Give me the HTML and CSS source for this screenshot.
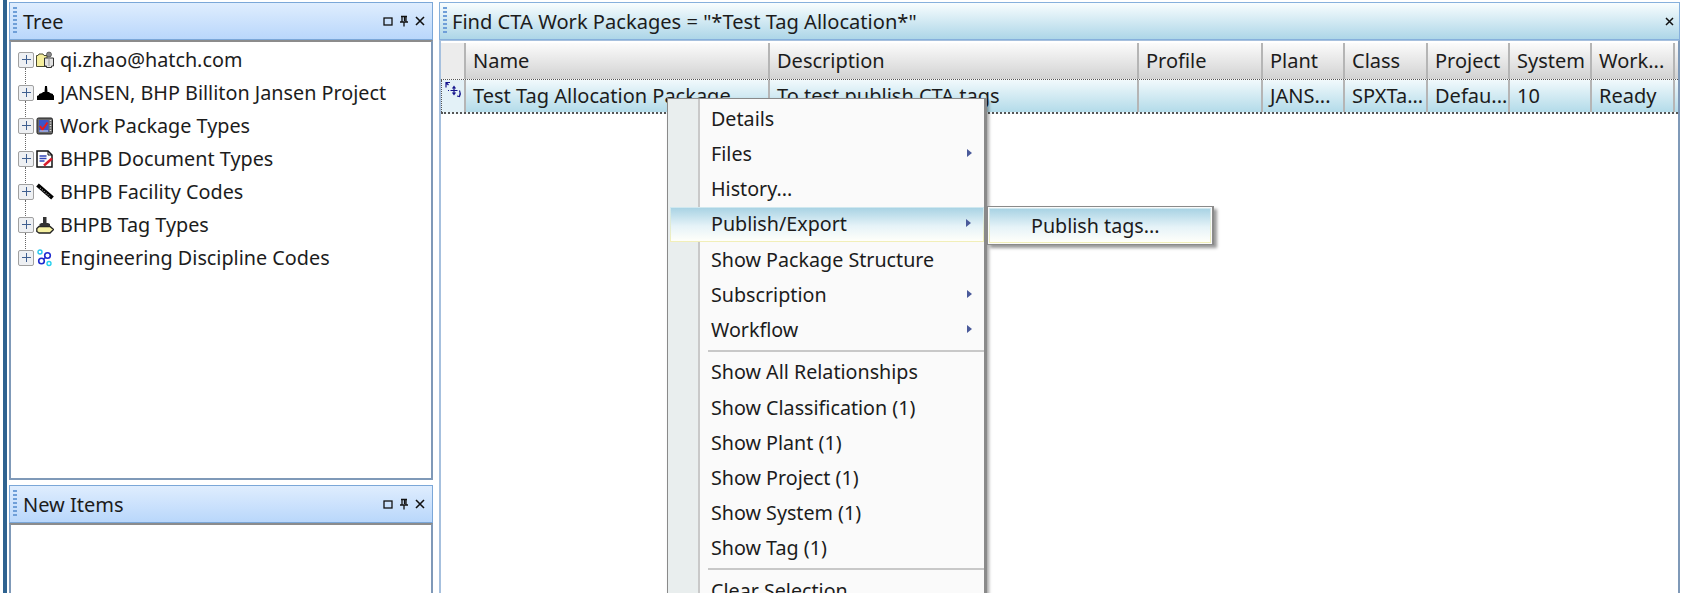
FILE: index.html
```html
<!DOCTYPE html>
<html lang="en">
<head>
<meta charset="utf-8">
<title>Find CTA Work Packages</title>
<link rel="stylesheet" href="styles.css">
</head>
<body>
<div class="app">
  <div class="left">
    <section class="pane tree-pane">
      <header class="title blue">
        <span class="grip"></span><span class="title-text">Tree</span>
        <span class="ctrls">
          <svg width="10" height="9" viewBox="0 0 10 9"><rect x="1" y="1" width="8" height="7" fill="none" stroke="#111" stroke-width="1.3"/></svg>
          <svg width="10" height="12" viewBox="0 0 10 12"><path d="M2 1.5h6M3 1.5v5M7 1.5v5M1 7h8M5 7v4.5M5.5 2v4" fill="none" stroke="#111" stroke-width="1.3"/></svg>
          <svg width="10" height="10" viewBox="0 0 10 10"><path d="M1 1l8 8M9 1l-8 8" stroke="#111" stroke-width="1.6"/></svg>
        </span>
      </header>
      <div class="body tree-body">
        <div class="node"><span class="exp"></span>
          <svg class="ico" width="18" height="18" viewBox="0 0 18 18"><path d="M0.500 4.500h1.500l1-1.500h4l1 1.500h3v11h-10.500z" fill="#f6ef9c" stroke="#4a4a30"/><circle cx="13" cy="3.500" r="2.500" fill="#8a8a8a" stroke="#333" stroke-width=".6"/><path d="M8.500 7h9v8h-2v1.500h-5v-1.500h-2z" fill="#e2e2e2" stroke="#333"/><path d="M13 7v8" stroke="#999"/></svg>
          <span>qi.zhao@hatch.com</span></div>
        <div class="node"><span class="exp"></span>
          <svg class="ico" width="18" height="18" viewBox="0 0 18 18"><path d="M1 16v-4l2-1v-1l3-1 1-1h1.500l.5-6h2l.5 6h1.500l1 1 3 1v1l2 1v4z" fill="#000"/></svg>
          <span>JANSEN, BHP Billiton Jansen Project</span></div>
        <div class="node"><span class="exp"></span>
          <svg class="ico" width="18" height="18" viewBox="0 0 18 18"><rect x="1" y="1" width="15.500" height="16" rx="1.500" fill="#6a6a6a" stroke="#1c1c1c"/><rect x="3" y="3" width="9.500" height="12" fill="#3b55c9"/><path d="M4 9l2.500 3.500 5-7" fill="none" stroke="#e81c1c" stroke-width="2"/><path d="M3.500 14h8.500" stroke="#e8e8e8"/><path d="M14.500 3v12" stroke="#ddd" stroke-dasharray="1 1.500" stroke-width="1.500"/></svg>
          <span>Work Package Types</span></div>
        <div class="node"><span class="exp"></span>
          <svg class="ico" width="18" height="18" viewBox="0 0 18 18"><path d="M1 1h11l4 4v12h-15z" fill="#fff" stroke="#111" stroke-width="1.500"/><path d="M12 1v4h4" fill="none" stroke="#111"/><path d="M3.500 6h7M3.500 8.500h7M3.500 11h5" stroke="#3245b8" stroke-width="1.400"/><path d="M8 15.500l8-7" stroke="#d81c2c" stroke-width="2.400"/></svg>
          <span>BHPB Document Types</span></div>
        <div class="node"><span class="exp"></span>
          <svg class="ico" width="18" height="18" viewBox="0 0 18 18"><path d="M1.500 2l15 13" stroke="#000" stroke-width="4"/><path d="M4 5l10 8.500" stroke="#aaa" stroke-width="1.200" stroke-dasharray="1 1.500"/></svg>
          <span>BHPB Facility Codes</span></div>
        <div class="node"><span class="exp"></span>
          <svg class="ico" width="18" height="18" viewBox="0 0 18 18"><path d="M3 17l-2.200-1.500v-3l2.200-2h11l3.500 3-3.500 3.500z" fill="#f6f1a2" stroke="#222" stroke-width="1.300"/><path d="M3.500 10.500v-2.500l2-1h1.500v-6h3.500v6h1.500l2 1v2.500z" fill="#333"/></svg>
          <span>BHPB Tag Types</span></div>
        <div class="node"><span class="exp"></span>
          <svg class="ico" width="18" height="18" viewBox="0 0 18 18" fill="none"><circle cx="4" cy="3" r="2" stroke="#27c8ee" stroke-width="1.400"/><circle cx="11.500" cy="6.500" r="2.800" stroke="#1f2bd0" stroke-width="1.600"/><circle cx="5.500" cy="12" r="2.800" stroke="#1f2bd0" stroke-width="1.600"/><circle cx="13" cy="14.500" r="2" stroke="#27d0ee" stroke-width="1.400"/><path d="M9.500 8.500l-2 1.500" stroke="#1f2bd0" stroke-width="1.400"/></svg>
          <span>Engineering Discipline Codes</span></div>
      </div>
    </section>
    <section class="pane items-pane">
      <header class="title blue">
        <span class="grip"></span><span class="title-text">New Items</span>
        <span class="ctrls">
          <svg width="10" height="9" viewBox="0 0 10 9"><rect x="1" y="1" width="8" height="7" fill="none" stroke="#111" stroke-width="1.3"/></svg>
          <svg width="10" height="12" viewBox="0 0 10 12"><path d="M2 1.5h6M3 1.5v5M7 1.5v5M1 7h8M5 7v4.5M5.5 2v4" fill="none" stroke="#111" stroke-width="1.3"/></svg>
          <svg width="10" height="10" viewBox="0 0 10 10"><path d="M1 1l8 8M9 1l-8 8" stroke="#111" stroke-width="1.6"/></svg>
        </span>
      </header>
      <div class="body open"></div>
    </section>
  </div>
  <section class="pane main-pane">
    <header class="title teal">
      <span class="grip"></span><span class="title-text">Find CTA Work Packages = "*Test Tag Allocation*"</span>
      <span class="ctrls">
        <svg width="9" height="9" viewBox="0 0 9 9"><path d="M1 1l7 7M8 1l-7 7" stroke="#111" stroke-width="1.5"/></svg>
      </span>
    </header>
    <div class="body grid">
      <div class="row head">
        <div class="cell c0"></div>
        <div class="cell c1">Name</div><div class="cell c2">Description</div><div class="cell c3">Profile</div>
        <div class="cell c4">Plant</div><div class="cell c5">Class</div><div class="cell c6">Project</div>
        <div class="cell c7">System</div><div class="cell c8">Work...</div>
      </div>
      <div class="row sel">
        <div class="cell c0">
          <svg class="row-ico" width="18" height="18" viewBox="0 0 18 18" fill="none" stroke="#14148c" stroke-width="1.200"><path d="M1 6.500v-5h4M1.500 2l2 2M9 6v7M5.500 9.500h7M7.500 7.500l1.500-2 1.500 2M7.500 11.500l1.500 2 1.500-2M3 9.500h1M14.500 9.500c1 2 1 4 0 6l-2.500-.5"/></svg>
        </div>
        <div class="cell c1">Test Tag Allocation Package</div><div class="cell c2">To test publish CTA tags</div><div class="cell c3"></div>
        <div class="cell c4">JANS...</div><div class="cell c5">SPXTa...</div><div class="cell c6">Defau...</div>
        <div class="cell c7">10</div><div class="cell c8">Ready</div>
      </div>
    </div>
  </section>
  <nav class="menu">
    <div class="mi">Details</div>
    <div class="mi sub">Files</div>
    <div class="mi">History...</div>
    <div class="mi sub hot">Publish/Export</div>
    <div class="mi">Show Package Structure</div>
    <div class="mi sub">Subscription</div>
    <div class="mi sub">Workflow</div>
    <div class="sep"></div>
    <div class="mi">Show All Relationships</div>
    <div class="mi">Show Classification (1)</div>
    <div class="mi">Show Plant (1)</div>
    <div class="mi">Show Project (1)</div>
    <div class="mi">Show System (1)</div>
    <div class="mi">Show Tag (1)</div>
    <div class="sep"></div>
    <div class="mi">Clear Selection</div>
  </nav>
  <nav class="submenu"><div class="si">Publish tags...</div></nav>
</div>
</body>
</html>
```
FILE: styles.css
```css
* { box-sizing: border-box; }
html, body { margin: 0; height: 600px; background: #fff; overflow: hidden; }
body { font-family: "Noto Sans", "Open Sans", sans-serif; font-size: 20px; color: #1c1c1c; }
.app { display: flex; height: 593px; padding-left: 3px; padding-right: 4px; overflow: hidden; position: relative; }
.left { width: 430px; flex: none; display: flex; flex-direction: column; border-left: 4px solid #2f6390; padding: 2px 0 0 2px; gap: 5px; margin-right: 6px; }
.pane { display: flex; flex-direction: column; min-height: 0; }
.tree-pane { height: 478px; flex: none; }
.items-pane { flex: 1; }
.main-pane { flex: 1; padding-top: 2px; min-width: 0; }
.title { height: 38px; flex: none; display: flex; align-items: center; border: 1px solid #7ba7d8; }
.blue { background: linear-gradient(#dfedfe, #b9d7fb); }
.teal { background: linear-gradient(#f8fdfe, #add6e8); border-color: #86b0dc; }
.grip { width: 4px; height: 28px; margin-left: 3px; flex: none; background: repeating-linear-gradient(#6f9fd8 0 2px, transparent 2px 4px); }
.title-text { margin-left: 6px; padding-top: 1px; white-space: nowrap; }
.teal .title-text { margin-left: 5px; padding-top: 0; font-size: 20.100px; }
.ctrls { margin-left: auto; margin-right: 7px; display: flex; gap: 6px; align-items: center; }
.teal .ctrls { margin-right: 5px; }
.body { flex: 1; background: #fff; border: 2px solid #7f99b8; border-top-color: #8c8c8c; min-height: 0; overflow: hidden; }
.open { border-bottom: 0; }
.tree-body { padding: 1px 0 0 7px; font-size: 19.800px; }
.node { height: 33px; display: flex; align-items: center; white-space: nowrap; position: relative; }
.exp { width: 16px; height: 16px; flex: none; border: 1.500px solid #a0a0a0; border-radius: 2px; margin-right: 2px;
  background: linear-gradient(#3f5f90, #3f5f90) center / 9px 1px no-repeat, linear-gradient(#3f5f90, #3f5f90) center / 1px 9px no-repeat, #eef0f3; }
.node:not(:last-child) .exp::after { content: ""; position: absolute; left: 7px; top: 25px; height: 16px; border-left: 1px dotted #666; }
.ico { flex: none; margin-right: 6px; }
.grid { border-width: 1px 0 0 2px; border-color: #a6c0de; border-right: 2px solid #7f99b8; padding-top: 2px; }
.row { display: flex; }
.head { height: 37px; background: linear-gradient(#fbfbfb, #d2d2d2); border-bottom: 1px dotted #555; }
.sel { height: 34px; background: linear-gradient(#f1f9fc, #b3dbe9); border-bottom: 2px dotted #555; }
.cell { flex: none; display: flex; align-items: center; padding-left: 7px; padding-bottom: 2px; border-right: 2px solid #b5b5b5; white-space: nowrap; overflow: hidden; }
.c0 { width: 25px; padding: 0 0 0 3px; border-left: 1px dotted #555; }
.sel .c0 { background: #e3f1f7; }
.head .c0 { border-left: 0; background: #ececec; }
.row-ico { align-self: flex-start; margin-top: 1px; }
.c1 { width: 304px; } .c2 { width: 369px; } .c3 { width: 124px; } .c4 { width: 82px; }
.c5 { width: 83px; } .c6 { width: 82px; } .c7 { width: 82px; } .c8 { width: 83px; }
.menu { position: absolute; left: 667px; top: 98px; width: 320px; height: 510px; font-size: 19.700px; background: #fafafa linear-gradient(90deg, #e9eeee 30px, #c9c9c9 30px, #c9c9c9 32px, transparent 32px);
  border: 1px solid #8a8a8a; border-right-width: 3px; padding: 2px 3px; box-shadow: 2px 2px 3px rgba(0,0,0,.35); }
.mi { height: 35.200px; display: flex; align-items: center; padding-left: 40px; position: relative; white-space: nowrap; }
.sub::after { content: ""; position: absolute; right: 9px; top: 50%; margin-top: -5px; border-left: 5px solid #4a5a9a; border-top: 4px solid transparent; border-bottom: 4px solid transparent; }
.hot, .si { background: linear-gradient(#a9d3e4, #e6f3f8 55%, #fffffa); border: 1px solid; border-image: linear-gradient(#cfe8f0, #f2efb8) 1; }
.hot { margin: 0 -3px 0 -1px; padding: 0 0 2px 40px; }
.hot.sub::after { right: 12px; }
.sep { height: 2px; margin: 3px -3px 2px 37px; background: #c8c8c8; }
.submenu { position: absolute; left: 987px; top: 206px; width: 227px; height: 39px; font-size: 19.700px; background: #fafafa; border: 1px solid #8a8a8a; border-right-width: 2px; padding: 1px; box-shadow: 3px 3px 3px rgba(0,0,0,.4); }
.si { height: 100%; display: flex; align-items: center; padding-left: 41px; white-space: nowrap; }
```
